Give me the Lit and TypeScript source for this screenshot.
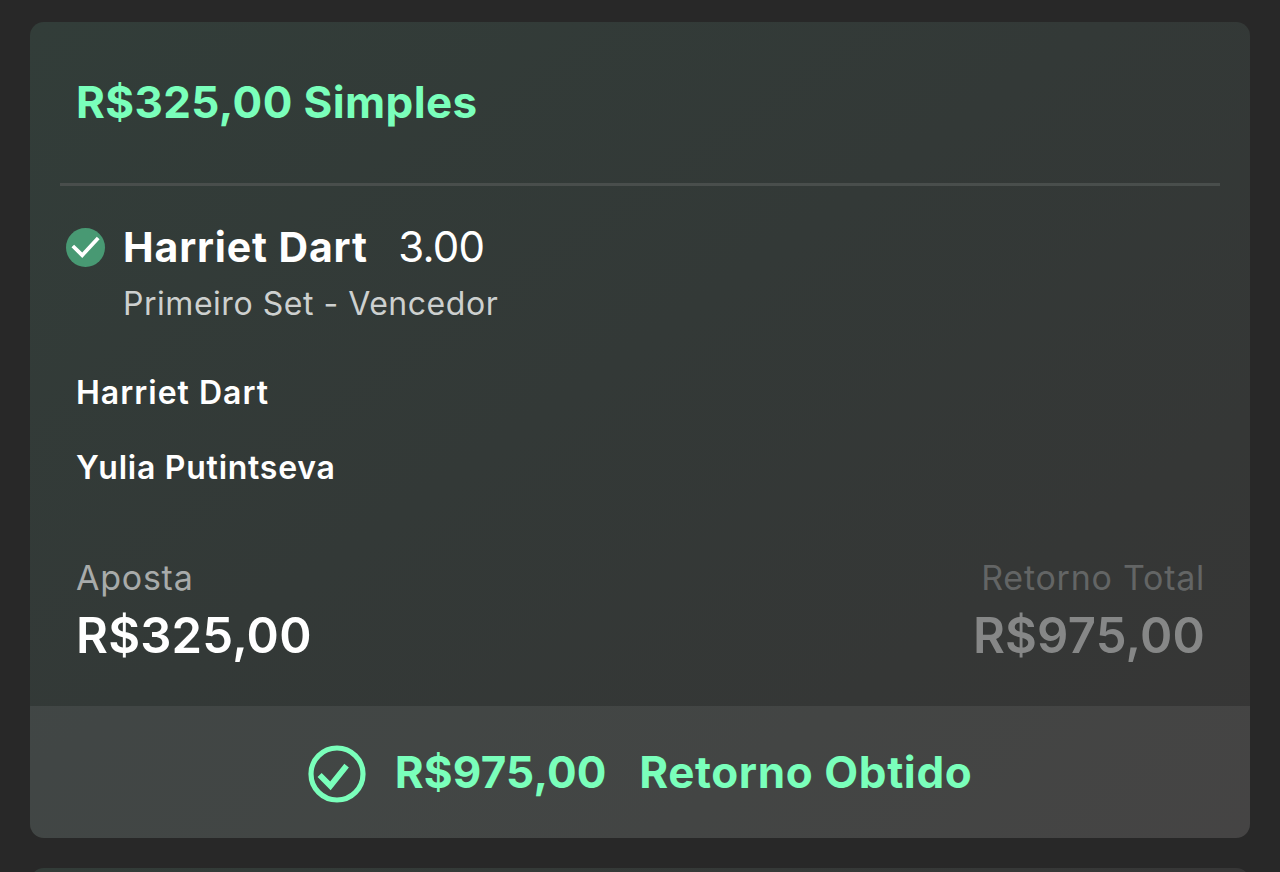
import { html, css, LitElement } from 'lit';
import { customElement, property } from 'lit/decorators.js';

@customElement('bet-selection')
export class BetSelection extends LitElement {
  static styles = css`
    :host {
      display: grid;
      grid-template-columns: 40px 1fr;
      column-gap: 17px;
      padding: 0 36px;
      color: #fff;
    }

    .icon {
      width: 40px;
      height: 40px;
      align-self: center;
    }

    .name-row {
      display: flex;
      align-items: center;
      height: 57px;
      gap: 30.5px;
      font-size: 41px;
      white-space: nowrap;
    }

    .name {
      font-weight: 700;
      letter-spacing: 0.85px;
    }

    .odds {
      font-size: 42px;
      letter-spacing: -0.8px;
    }

    .market {
      grid-column: 2;
      height: 57px;
      line-height: 57px;
      font-size: 32px;
      letter-spacing: 0.53px;
      color: #cdd0cf;
    }
  `;

  @property() name = '';
  @property() odds = '';
  @property() market = '';

  render() {
    return html`
      <svg class="icon" viewBox="0 0 40 40">
        <circle cx="19.5" cy="20.5" r="19.5" fill="#489973" />
        <path d="M6.8 19 L16.2 28.2 L32.2 11" fill="none" stroke="#fff" stroke-width="3.8" />
      </svg>
      <div class="name-row">
        <span class="name">${this.name}</span>
        <span class="odds">${this.odds}</span>
      </div>
      <div class="market">${this.market}</div>
    `;
  }
}

@customElement('bet-card')
export class BetCard extends LitElement {
  static styles = css`
    :host {
      display: block;
      height: 816px;
      border-radius: 14px;
      overflow: hidden;
      background: linear-gradient(145deg, #323d39 0%, #333937 45%, #353736 75%, #373636 100%);
    }

    .header {
      height: 161px;
      line-height: 160px;
      padding-left: 46px;
      font-size: 44px;
      font-weight: 650;
      letter-spacing: 0.38px;
      color: #7affbb;
    }

    .divider {
      height: 3px;
      margin: 0 30px 32px;
      background: #494e4c;
    }

    .players {
      margin: 24px 46px 44px;
      font-size: 32px;
      font-weight: 600;
      line-height: 74.5px;
      letter-spacing: 0.75px;
      color: #fff;
    }

    .player:first-child {
      letter-spacing: 1px;
    }

    .totals {
      display: flex;
      justify-content: space-between;
      height: 157px;
      padding: 0 45px 0 46px;
    }

    .total {
      line-height: 57px;
      color: #fff;
    }

    .total.dim {
      text-align: right;
      color: #868787;
    }

    .label {
      font-size: 34px;
      letter-spacing: 0.75px;
      color: #a8abaa;
    }

    .dim .label {
      color: #636565;
    }

    .amount {
      padding-top: 1px;
      font-size: 49px;
      font-weight: 600;
      letter-spacing: 0.2px;
    }

    .footer {
      display: flex;
      align-items: center;
      justify-content: center;
      height: 132px;
      background: rgba(255, 255, 255, 0.07);
      font-size: 44px;
      font-weight: 700;
      color: #7affbb;
      white-space: nowrap;
    }

    .check {
      width: 58px;
      height: 58px;
      margin: 3px 29px 0 0;
    }

    .payout {
      letter-spacing: 0.2px;
    }

    .result {
      margin-left: 32.5px;
      letter-spacing: 0.6px;
    }
  `;

  @property() stake = '';
  @property() payout = '';
  @property({ type: Array }) players: string[] = [];

  render() {
    return html`
      <div class="header">${this.stake} Simples</div>
      <div class="divider"></div>
      <slot></slot>
      <div class="players">${this.players.map((player) => html`<div class="player">${player}</div>`)}</div>
      <div class="totals">
        <div class="total">
          <div class="label">Aposta</div>
          <div class="amount">${this.stake}</div>
        </div>
        <div class="total dim">
          <div class="label">Retorno Total</div>
          <div class="amount">${this.payout}</div>
        </div>
      </div>
      <div class="footer">
        <svg class="check" viewBox="0 0 58 58">
          <circle cx="29" cy="29" r="26" fill="none" stroke="#7affbb" stroke-width="5.2" />
          <path d="M11.6 30 L22.4 40.8 L38.6 20.6" fill="none" stroke="#7affbb" stroke-width="5.8" />
        </svg>
        <span class="payout">${this.payout}</span>
        <span class="result">Retorno Obtido</span>
      </div>
    `;
  }
}

@customElement('app-root')
export class AppRoot extends LitElement {
  static styles = css`
    :host {
      display: flex;
      flex-direction: column;
      gap: 30px;
      box-sizing: border-box;
      height: 872px;
      padding: 22px 30px 0;
      overflow: hidden;
      background: #282828;
      font-family: Inter, 'Liberation Sans', sans-serif;
    }

    bet-card {
      flex: none;
    }

    .next-card {
      flex: none;
      height: 40px;
      border-radius: 14px;
      background: linear-gradient(90deg, #323c38, #373737);
    }
  `;

  render() {
    return html`
      <bet-card
        stake="R$325,00"
        payout="R$975,00"
        .players=${['Harriet Dart', 'Yulia Putintseva']}
      >
        <bet-selection name="Harriet Dart" odds="3.00" market="Primeiro Set - Vencedor"></bet-selection>
      </bet-card>
      <div class="next-card"></div>
    `;
  }
}
